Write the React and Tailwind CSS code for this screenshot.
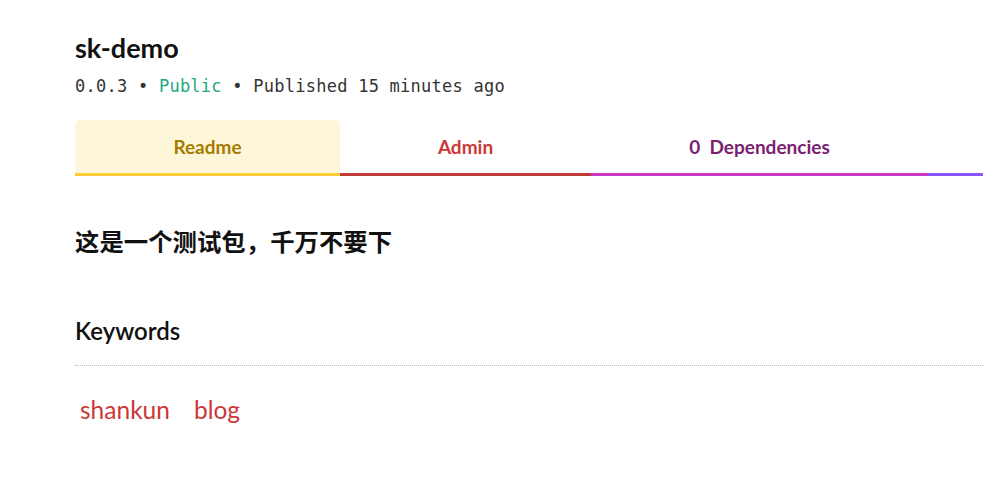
import React from 'react';

const tabs = [
  { label: 'Readme', width: 'w-[265px]', text: 'text-[#a67b00]', border: 'border-[#ffcd3a]', bg: 'bg-[#fef6d9]' },
  { label: 'Admin', width: 'w-[251px]', text: 'text-[#cb3837]', border: 'border-[#c13a35]', bg: '' },
  { label: '0\u00a0 Dependencies', width: 'w-[337px]', text: 'text-[#7a1e72]', border: 'border-[#c836c3]', bg: '' },
  { label: '', width: 'w-[80px]', text: 'text-[#5a2fcf]', border: 'border-[#8956ff]', bg: '' },
];

const App = () => {
  return (
    <div className="w-[983px] h-[493px] overflow-hidden bg-white font-['Lato','Noto_Sans_CJK_SC',sans-serif]">
      <div className="pl-[75px] pt-[30px]">
        {/* Header */}
        <h1 className="text-[27px] leading-[36px] font-bold text-[#111]">sk-demo</h1>
        <div className="mt-[8px] font-['DejaVu_Sans_Mono',monospace] text-[17px] leading-[24px] text-[#333] whitespace-nowrap tracking-[0.25px]">
          <span>0.0.3</span>
          <span> • </span>
          <span className="text-[#1ea884]">Public</span>
          <span> • </span>
          <span>Published 15 minutes ago</span>
        </div>

        {/* Tabs */}
        <ul className="mt-[22px] flex whitespace-nowrap">
          {tabs.map((tab, i) => (
            <li
              key={i}
              className={`${tab.width} ${tab.bg} ${tab.text} ${tab.border} shrink-0 h-[56px] flex items-center justify-center border-b-[3px] rounded-t-[5px] text-[19px] font-bold pt-[2px]`}
            >
              {tab.label}
            </li>
          ))}
        </ul>

        {/* Readme */}
        <h2 className="mt-[49px] text-[24.4px] leading-[34px] font-bold text-[#111]">这是一个测试包，千万不要下</h2>

        {/* Keywords */}
        <h3 className="mt-[56px] text-[24px] leading-[32px] font-semibold text-[#111]">Keywords</h3>
        <div className="mt-[18px] border-t border-dotted border-[#bbb]"></div>
        <ul className="mt-[28px] flex gap-[24px] pl-[5px] text-[24.5px] leading-[32px] text-[#cb3837]">
          <li>shankun</li>
          <li>blog</li>
        </ul>
      </div>
    </div>
  );
};

export default App;
